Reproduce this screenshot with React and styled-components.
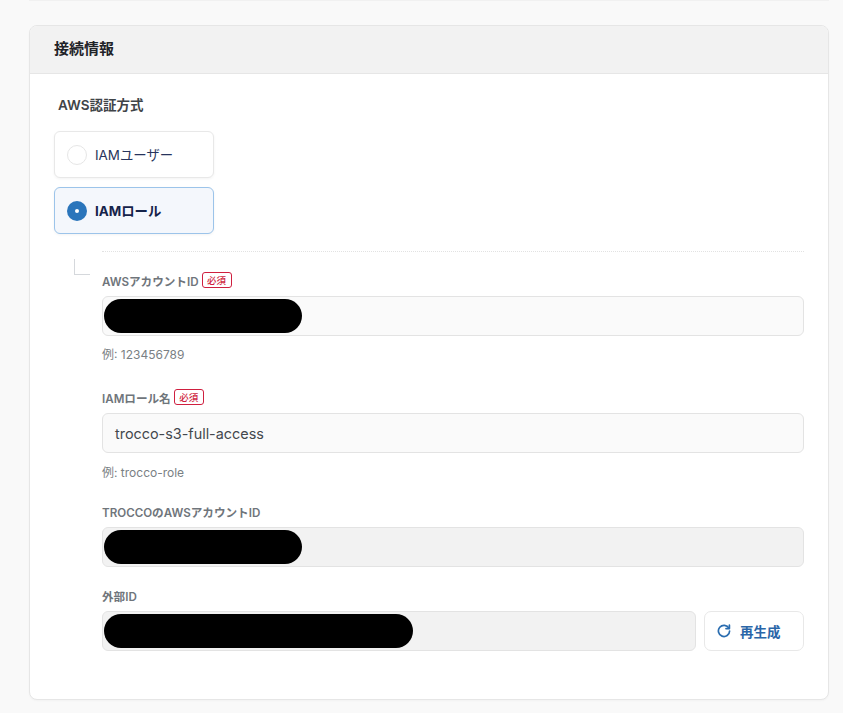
import styled, { createGlobalStyle } from 'styled-components'

const FONT = `Inter, 'Noto Sans CJK JP', sans-serif`

const GlobalStyle = createGlobalStyle`
  html, body {
    margin: 0;
    padding: 0;
    background: #f9f9f9;
    font-family: ${FONT};
    overflow: hidden;
  }
  * {
    box-sizing: border-box;
  }
`

function App() {
  return (
    <>
      <GlobalStyle />
      <StyledPage>
        <StyledPrevCard />
        <StyledCard>
          <StyledCardHeader>接続情報</StyledCardHeader>
          <StyledCardBody>
            <StyledGroupLabel>AWS認証方式</StyledGroupLabel>
            <StyledRadioList>
              <StyledRadioCard>
                <StyledRadioDot />
                <StyledRadioText>IAMユーザー</StyledRadioText>
              </StyledRadioCard>
              <StyledRadioCard $checked>
                <StyledRadioDot $checked />
                <StyledRadioText>IAMロール</StyledRadioText>
              </StyledRadioCard>
            </StyledRadioList>

            <StyledNested>
              <StyledCorner />
              <StyledFields>
                <StyledField $gap={25}>
                  <StyledLabel>
                    AWSアカウントID <StyledRequired>必須</StyledRequired>
                  </StyledLabel>
                  <StyledInputWrap>
                    <StyledInput $bg="#fafafa" />
                    <StyledRedaction $width={198} />
                  </StyledInputWrap>
                  <StyledHint>例: 123456789</StyledHint>
                </StyledField>

                <StyledField $gap={21}>
                  <StyledLabel>
                    IAMロール名 <StyledRequired>必須</StyledRequired>
                  </StyledLabel>
                  <StyledInput $bg="#fafafa">trocco-s3-full-access</StyledInput>
                  <StyledHint $offset={1}>例: trocco-role</StyledHint>
                </StyledField>

                <StyledField $gap={19}>
                  <StyledLabel>TROCCOのAWSアカウントID</StyledLabel>
                  <StyledInputWrap>
                    <StyledInput $bg="#f2f2f2" />
                    <StyledRedaction $width={198} />
                  </StyledInputWrap>
                </StyledField>

                <StyledField>
                  <StyledLabel>外部ID</StyledLabel>
                  <StyledInputRow>
                    <StyledInputWrap>
                      <StyledInput $bg="#f2f2f2" />
                      <StyledRedaction $width={309} />
                    </StyledInputWrap>
                    <StyledButton>
                      <svg
                        width="14"
                        height="14"
                        viewBox="0 0 14 14"
                        fill="none"
                        stroke="#2a6db0"
                        strokeWidth="1.7"
                        strokeLinecap="round"
                      >
                        <path d="M11.9 4.2A5.6 5.6 0 1 0 12.6 7" />
                        <path d="M12.4 1.2v3.4H9" strokeLinejoin="round" />
                      </svg>
                      再生成
                    </StyledButton>
                  </StyledInputRow>
                </StyledField>
              </StyledFields>
            </StyledNested>
          </StyledCardBody>
        </StyledCard>
      </StyledPage>
    </>
  )
}

export default App

const StyledPage = styled.div`
  width: 843px;
  height: 713px;
  padding: 0 14px 0 29px;
`

const StyledPrevCard = styled.div`
  height: 1px;
  margin-bottom: 24px;
  background: #f1f1f1;
`

const StyledCard = styled.section`
  width: 800px;
  height: 675px;
  background: #fff;
  border: 1px solid #e6e6e6;
  border-radius: 8px;
  box-shadow: 0 1px 2px rgba(0, 0, 0, 0.03);
  overflow: hidden;
`

const StyledCardHeader = styled.h2`
  margin: 0;
  height: 48px;
  padding: 0 24px 4px;
  display: flex;
  align-items: center;
  background: #f2f2f2;
  border-bottom: 1px solid #e6e6e6;
  color: #1f2328;
  font-size: 15px;
  font-weight: 700;
`

const StyledCardBody = styled.div`
  padding: 22px 24px 0;
`

const StyledGroupLabel = styled.div`
  margin-left: 4px;
  height: 18px;
  line-height: 18px;
  color: #3f4448;
  font-size: 13.5px;
  font-weight: 600;
`

const StyledRadioList = styled.div`
  display: flex;
  flex-direction: column;
  gap: 9px;
  margin-top: 17px;
`

const StyledRadioCard = styled.div`
  width: 160px;
  height: 47px;
  padding: 0 12px;
  display: flex;
  align-items: center;
  gap: 8px;
  border-radius: 6px;
  border: 1px solid ${(p) => (p.$checked ? '#9cc4ea' : '#e8e8e8')};
  background: ${(p) => (p.$checked ? '#f4f7fc' : '#fff')};
  box-shadow: 0 1px 3px rgba(0, 0, 0, 0.05);
  color: ${(p) => (p.$checked ? '#14234a' : '#27345c')};
  font-size: 13.4px;
  font-weight: ${(p) => (p.$checked ? 700 : 400)};
`

const StyledRadioText = styled.span`
  margin-bottom: 2px;
`

const StyledRadioDot = styled.span`
  width: 20px;
  height: 20px;
  flex: none;
  border-radius: 50%;
  display: flex;
  align-items: center;
  justify-content: center;
  border: ${(p) => (p.$checked ? 'none' : '1px solid #e6e6e6')};
  background: ${(p) => (p.$checked ? '#2a75bb' : '#fff')};

  &::after {
    content: '';
    display: ${(p) => (p.$checked ? 'block' : 'none')};
    width: 4px;
    height: 4px;
    border-radius: 50%;
    background: #fff;
  }
`

const StyledNested = styled.div`
  position: relative;
  margin-top: 17px;
  padding-left: 48px;
`

const StyledCorner = styled.span`
  position: absolute;
  left: 20px;
  top: 8px;
  width: 16px;
  height: 16px;
  border-left: 1px solid #d5d8dc;
  border-bottom: 1px solid #d5d8dc;
`

const StyledFields = styled.div`
  border-top: 1px dotted #e2e2e2;
  padding-top: 19px;
`

const StyledField = styled.div`
  margin-bottom: ${(p) => p.$gap || 0}px;
`

const StyledLabel = styled.div`
  display: flex;
  align-items: center;
  gap: 3px;
  height: 17px;
  padding-top: 2px;
  margin-bottom: 8px;
  color: #6f757b;
  font-size: 11.6px;
  font-weight: 600;
`

const StyledRequired = styled.span`
  display: inline-flex;
  align-items: center;
  justify-content: center;
  width: 30px;
  height: 16px;
  margin-top: -2px;
  border: 1px solid #cf1f3f;
  border-radius: 3px;
  color: #cf1f3f;
  font-size: 9.5px;
  font-weight: 500;
`

const StyledInputRow = styled.div`
  display: flex;
  gap: 8px;

  > div {
    flex: 1;
  }
`

const StyledInputWrap = styled.div`
  position: relative;
`

const StyledInput = styled.div`
  height: 40px;
  padding: 1px 12px 0;
  display: flex;
  align-items: center;
  border: 1px solid #e3e3e3;
  border-radius: 6px;
  background: ${(p) => p.$bg};
  color: #43484d;
  font-size: 14.4px;
`

const StyledRedaction = styled.div`
  position: absolute;
  left: 2px;
  top: 3px;
  height: 34px;
  width: ${(p) => p.$width}px;
  border-radius: 17px;
  background: #000;
`

const StyledHint = styled.div`
  margin-top: ${(p) => 10 + (p.$offset || 0)}px;
  height: 17px;
  line-height: 17px;
  color: #7a7f84;
  font-size: 12px;
`

const StyledButton = styled.button`
  width: 100px;
  height: 40px;
  flex: none;
  padding: 0 0 0 12px;
  display: flex;
  align-items: center;
  gap: 9px;
  background: #fff;
  border: 1px solid #e8e8e8;
  border-radius: 7px;
  color: #2a66a8;
  font-family: ${FONT};
  font-size: 13.5px;
  font-weight: 700;
`
